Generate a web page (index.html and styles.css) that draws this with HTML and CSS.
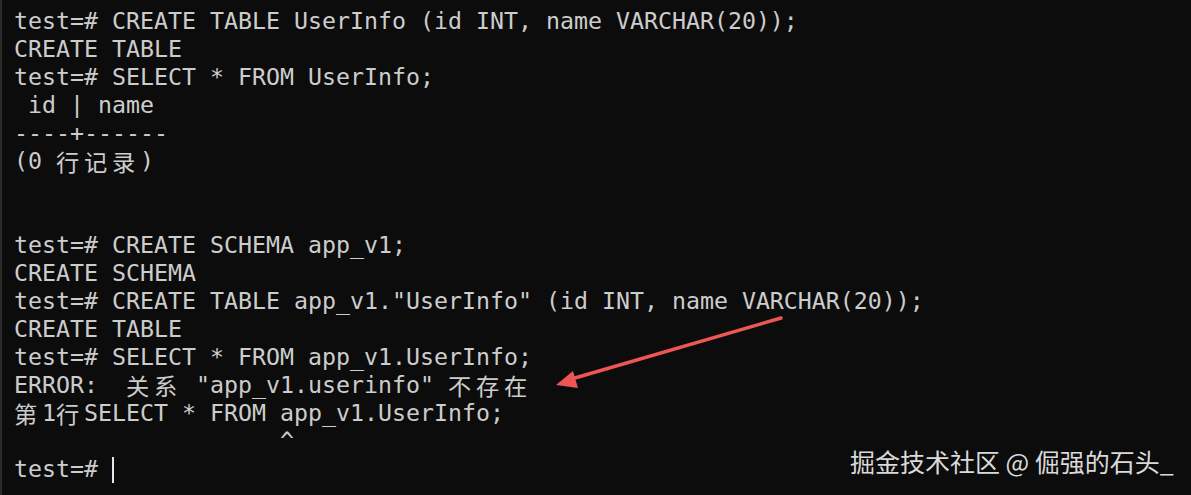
FILE: index.html
```html
<!DOCTYPE html>
<html lang="zh">
<head>
<meta charset="utf-8">
<title>psql</title>
<link rel="stylesheet" href="styles.css">
</head>
<body>
<div class="window">
  <div class="term">
    <div class="line">test=# CREATE TABLE UserInfo (id INT, name VARCHAR(20));</div>
    <div class="line">CREATE TABLE</div>
    <div class="line">test=# SELECT * FROM UserInfo;</div>
    <div class="line"> id | name</div>
    <div class="line">----+------</div>
    <div class="line">(0 <span class="w">行</span><span class="w">记</span><span class="w">录</span>)</div>
    <div class="line"></div>
    <div class="line"></div>
    <div class="line">test=# CREATE SCHEMA app_v1;</div>
    <div class="line">CREATE SCHEMA</div>
    <div class="line">test=# CREATE TABLE app_v1."UserInfo" (id INT, name VARCHAR(20));</div>
    <div class="line">CREATE TABLE</div>
    <div class="line">test=# SELECT * FROM app_v1.UserInfo;</div>
    <div class="line">ERROR:  <span class="w">关</span><span class="w">系</span> "app_v1.userinfo" <span class="w">不</span><span class="w">存</span><span class="w">在</span></div>
    <div class="line"><span class="w">第</span>1<span class="w">行</span>SELECT * FROM app_v1.UserInfo;</div>
    <div class="line">                   ^</div>
    <div class="line">test=# <span class="cursor"></span></div>
  </div>
  <svg class="arrow" width="1191" height="495" viewBox="0 0 1191 495" aria-hidden="true">
    <line x1="781" y1="318" x2="568" y2="380" stroke="#ee5656" stroke-width="3.5" stroke-linecap="round"/>
    <polygon points="556,385 573,371 578,388" fill="#ee5656"/>
  </svg>
  <div class="watermark">掘金技术社区 @ 倔强的石头_</div>
</div>
</body>
</html>
```
FILE: styles.css
```css
html, body {
  margin: 0;
  padding: 0;
  background: #0c0c0c;
}

.window {
  position: relative;
  width: 1191px;
  height: 495px;
  overflow: hidden;
  background: #0c0c0c;
  border-left: 2px solid #2c2c2c;
  box-sizing: border-box;
}

.term {
  display: flex;
  flex-direction: column;
  padding: 7px 0 0 12px;
  font-family: "DejaVu Sans Mono", "Noto Sans CJK SC", monospace;
  font-size: 23.25px;
  color: #cccccc;
}

.line {
  height: 28px;
  line-height: 28px;
  white-space: pre;
}

.w {
  display: inline-block;
  width: 28px;
  font-family: "Noto Sans CJK SC", sans-serif;
  line-height: 28px;
  vertical-align: top;
}

.cursor {
  display: inline-block;
  width: 2px;
  height: 26px;
  background: #e6e6e6;
  vertical-align: top;
  margin-top: 2px;
}

.arrow {
  position: absolute;
  left: -2px;
  top: 0;
}

.watermark {
  position: absolute;
  left: 848px;
  top: 447px;
  font-family: "Noto Sans CJK SC", sans-serif;
  font-size: 25px;
  line-height: 28px;
  color: #dadada;
  white-space: pre;
}
```
